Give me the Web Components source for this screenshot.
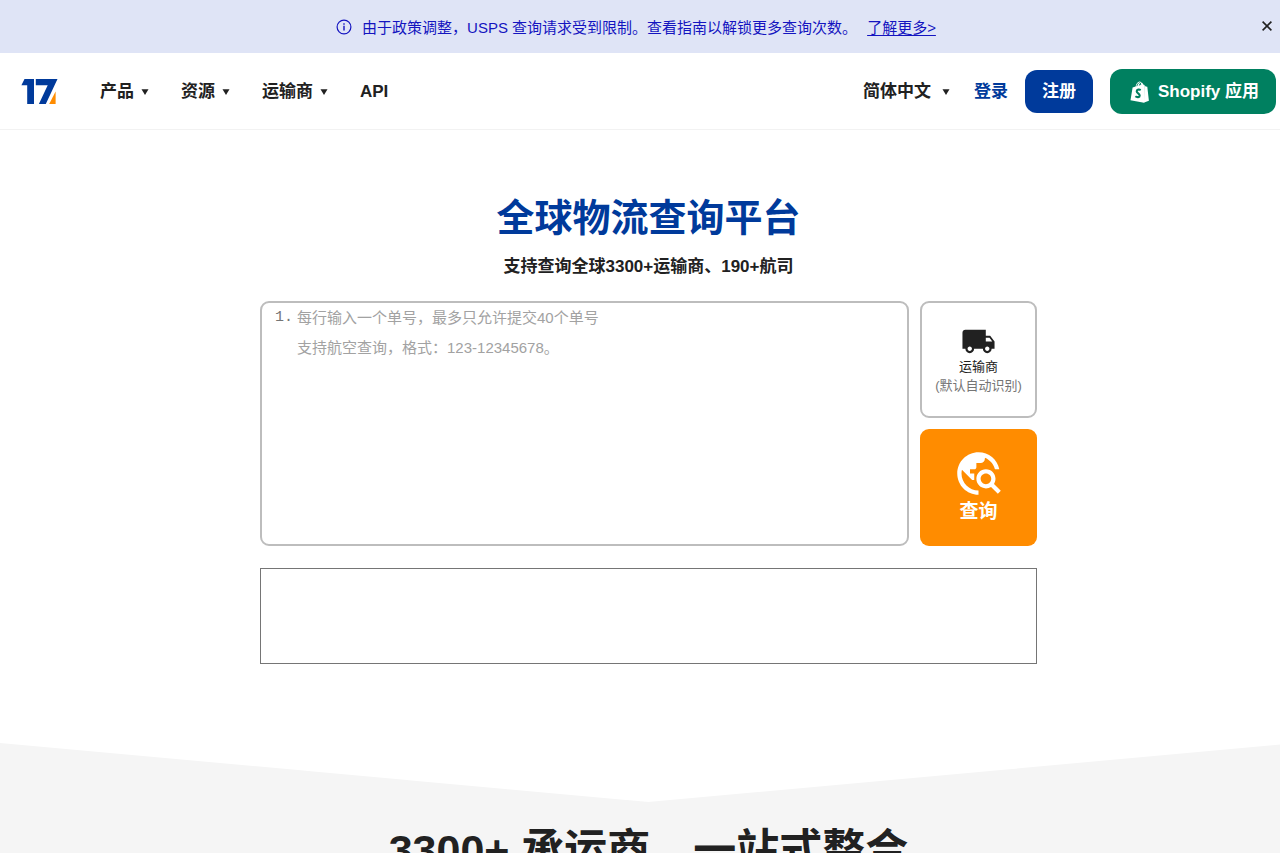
<!DOCTYPE html>
<html lang="zh-CN">
<head>
<meta charset="utf-8">
<meta name="viewport" content="width=device-width, initial-scale=1">
<title>全球物流查询平台</title>
<style>
  :root {
    --brand: #003a9b;
    --brand-accent: #ff8c00;
    --text: #212121;
    --muted: #757575;
    --outline: #bdbdbd;
    --page-min: 1297px;
  }
  html { scrollbar-width: none; }
  body {
    margin: 0;
    min-height: 100vh;
    overflow-x: hidden;
    background: #fff;
    color: var(--text);
    font: 17px/24px "Liberation Sans", Arial, "Noto Sans CJK SC", sans-serif;
  }
</style>
</head>
<body>
<notice-banner>
  由于政策调整，USPS 查询请求受到限制。查看指南以解锁更多查询次数。
  <a slot="link" href="#guide">了解更多&gt;</a>
</notice-banner>

<site-header>
  <nav-menu slot="nav">产品</nav-menu>
  <nav-menu slot="nav">资源</nav-menu>
  <nav-menu slot="nav">运输商</nav-menu>
  <nav-link slot="nav" href="#api">API</nav-link>
  <nav-menu slot="actions" wide>简体中文</nav-menu>
  <nav-link slot="actions" href="#login" accent>登录</nav-link>
  <pill-button slot="actions">注册</pill-button>
  <pill-button slot="actions" variant="shopify">Shopify 应用</pill-button>
</site-header>

<track-hero>
  <span slot="title">全球物流查询平台</span>
  <span slot="subtitle">支持查询全球3300+运输商、190+航司</span>
  <track-form></track-form>
  <ad-frame></ad-frame>
</track-hero>

<carrier-section>3300+ 承运商，一站式整合</carrier-section>

<script>
const baseStyles = `
  *, *::before, *::after { box-sizing: border-box; }
  button, textarea { font: inherit; color: inherit; margin: 0; }
  button { border: 0; padding: 0; background: none; cursor: pointer; }
  svg { display: block; flex: none; }
`;

/**
 * Shared base: renders `markup` and `styles` of the subclass in an open shadow root
 */
class BaseElement extends HTMLElement {
  static styles = "";
  static markup = "<slot></slot>";

  constructor() {
    super();
    const template = document.createElement("template");
    template.innerHTML = `<style>${baseStyles}${this.constructor.styles}</style>${this.constructor.markup}`;
    this.attachShadow({ mode: "open" }).appendChild(template.content.cloneNode(true));
  }
}

class NoticeBanner extends BaseElement {
  static styles = `
    :host {
      display: flex;
      align-items: center;
      min-height: 53px;
      padding-left: 18px;
      background: #dfe4f6;
      color: #1414c0;
      font-size: 15px;
    }
    .message {
      flex: 1;
      display: flex;
      align-items: center;
      justify-content: center;
      gap: 10px;
      padding-top: 2px;
    }
    svg { margin-bottom: 2px; }
    ::slotted(a) { color: inherit; text-underline-offset: 2px; }
    .close {
      display: grid;
      place-items: center;
      width: 26px;
      height: 26px;
      color: #212121;
    }
  `;
  static markup = `
    <div class="message">
      <svg width="16" height="16" viewBox="0 0 16 16" fill="none" stroke="currentColor" aria-hidden="true">
        <circle cx="8" cy="8" r="6.9" stroke-width="1.2"/>
        <path d="M8 6.8v4.8M8 4.2v1.5" stroke-width="1.4"/>
      </svg>
      <span><slot></slot></span>
      <slot name="link"></slot>
    </div>
    <button class="close" type="button" aria-label="关闭">
      <svg width="10" height="10" viewBox="0 0 10 10" stroke="currentColor" stroke-width="1.6" aria-hidden="true">
        <path d="M.6.6l8.8 8.8M9.4.6L.6 9.4"/>
      </svg>
    </button>
  `;

  connectedCallback() {
    this.shadowRoot.querySelector(".close").addEventListener("click", () => this.remove());
  }
}

class SiteHeader extends BaseElement {
  static styles = `
    :host {
      display: flex;
      align-items: center;
      justify-content: space-between;
      min-width: var(--page-min);
      min-height: 77px;
      box-sizing: border-box;
      padding: 0 21px;
      border-bottom: 1px solid #f2f2f2;
      font-weight: 700;
    }
    nav, .left, .actions { display: flex; align-items: center; }
    .left { gap: 42px; padding-top: 2px; }
    nav { gap: 32px; }
    .actions { gap: 17px; }
  `;
  static markup = `
    <div class="left">
      <a href="#home" aria-label="17TRACK">
        <svg width="37" height="26" viewBox="0 0 37 26" aria-hidden="true">
          <path fill="#003a9b" d="M3.500 0H13V25H6.200V6.200H.4z"/>
          <path fill="#003a9b" d="M14.800 0H36.500L24.800 25H17.900L26.700 6.200H14.800z"/>
          <path fill="#ff8c00" d="M34.600 12.500V25H28.200z"/>
        </svg>
      </a>
      <nav><slot name="nav"></slot></nav>
    </div>
    <div class="actions"><slot name="actions"></slot></div>
  `;
}

class NavMenu extends BaseElement {
  static styles = `
    :host { display: block; }
    :host([wide]) { margin-right: 7px; }
    button { display: flex; align-items: center; gap: 7px; font-weight: 700; }
    :host([wide]) button { gap: 11px; padding-top: 2px; }
  `;
  static markup = `
    <button type="button" aria-haspopup="true">
      <slot></slot>
      <svg width="8" height="6" viewBox="0 0 8 6" fill="currentColor" aria-hidden="true"><path d="M.5.3h7L4 5.900z"/></svg>
    </button>
  `;
}

class NavLink extends BaseElement {
  static styles = `
    :host { display: block; }
    a { color: inherit; text-decoration: none; }
    :host([accent]) { padding-top: 2px; }
    :host([accent]) a { color: var(--brand); }
  `;
  static markup = `<a><slot></slot></a>`;

  connectedCallback() {
    this.shadowRoot.querySelector("a").href = this.getAttribute("href") || "#";
  }
}

class PillButton extends BaseElement {
  static styles = `
    :host { display: block; }
    button {
      display: flex;
      align-items: center;
      gap: 8px;
      height: 43px;
      padding: 2px 17px 0;
      border-radius: 12px;
      background: var(--brand);
      color: #fff;
      font-weight: 700;
    }
    svg { display: none; }
    :host([variant="shopify"]) button { height: 45px; padding-left: 20px; background: #008060; }
    :host([variant="shopify"]) svg { display: block; }
  `;
  static markup = `
    <button type="button">
      <svg width="20" height="22" viewBox="0 0 20 22" aria-hidden="true">
        <path fill="#fff" d="M2.600 6.400l3-.9C6.200 2.900 7.800.8 9.600.6c.7 0 1.200.4 1.500 1 1-.1 1.700.8 2.100 2l1 .2L15 20.800l-1 .9L.5 19.300z"/>
        <path fill="#fff" d="M14.200 4l1.500 1.500 1.600.2L18.900 19.700l-4.700 1.700z"/>
        <path fill="none" stroke="#008060" stroke-width=".9" d="M6.800 5.200C7.300 3.300 8.400 1.800 9.600 1.600M9.300 4.500c.2-1.100.7-1.900 1.500-2.200M10 1.600c.6.7.7 1.600.7 2.500"/>
        <path fill="none" stroke="#008060" stroke-width="2.100" d="M10.700 9.100C9.300 8.200 6.700 8.400 6.700 10.300c0 2 3 2 3 4.100 0 2.100-2.700 2.200-4.300.9"/>
      </svg>
      <span><slot></slot></span>
    </button>
  `;
}

class TrackHero extends BaseElement {
  static styles = `
    :host {
      display: block;
      min-width: var(--page-min);
      box-sizing: border-box;
      padding: 60px 24px 79px;
    }
    .inner { max-width: 777px; margin: 0 auto; }
    h1, p { margin: 0; text-align: center; font-weight: 700; }
    h1 { color: var(--brand); font-size: 38px; line-height: 56px; }
    p { margin: 9px 0 22px; }
    .stack { display: grid; gap: 22px; }
  `;
  static markup = `
    <div class="inner">
      <h1><slot name="title"></slot></h1>
      <p><slot name="subtitle"></slot></p>
      <div class="stack"><slot></slot></div>
    </div>
  `;
}

class TrackForm extends BaseElement {
  static styles = `
    :host { display: block; }
    form { display: grid; grid-template-columns: 1fr 117px; gap: 11px; }
    .numbers {
      display: flex;
      gap: 4px;
      padding: 0 13px;
      border: 2px solid var(--outline);
      border-radius: 9px;
      font-size: 15px;
      line-height: 30px;
    }
    .gutter { color: var(--muted); font-family: "Liberation Mono", monospace; }
    textarea {
      flex: 1;
      padding: 0;
      border: 0;
      outline: 0;
      resize: none;
      background: none;
    }
    textarea::placeholder { color: #a2a2a2; opacity: 1; }
    .side { display: grid; gap: 11px; }
    .side button {
      display: flex;
      flex-direction: column;
      align-items: center;
      justify-content: center;
      height: 117px;
      border-radius: 9px;
    }
    .side .carrier { border: 2px solid var(--outline); font-size: 13px; line-height: 19px; }
    .carrier svg { margin-bottom: -2px; }
    .carrier small { color: var(--muted); font-size: 13px; }
    .side .submit {
      padding-bottom: 2px;
      background: var(--brand-accent);
      color: #fff;
      font-size: 19px;
      font-weight: 700;
      line-height: 26px;
    }
  `;
  static markup = `
    <form>
      <div class="numbers">
        <label class="gutter" for="numbers">1.</label>
        <textarea id="numbers" placeholder="每行输入一个单号，最多只允许提交40个单号&#10;支持航空查询，格式：123-12345678。"></textarea>
      </div>
      <div class="side">
        <button class="carrier" type="button">
          <svg width="35" height="35" viewBox="0 0 24 24" fill="currentColor" aria-hidden="true">
            <path d="M20 8h-3V4H3c-1.100 0-2 .9-2 2v11h2c0 1.660 1.340 3 3 3s3-1.340 3-3h6c0 1.660 1.340 3 3 3s3-1.340 3-3h2v-5zM6 18.500c-.83 0-1.500-.67-1.500-1.500s.67-1.500 1.500-1.500 1.500.67 1.500 1.500-.67 1.500-1.500 1.500m13.500-9 1.960 2.500H17V9.500zm-1.500 9c-.83 0-1.500-.67-1.500-1.500s.67-1.500 1.500-1.500 1.500.67 1.500 1.500-.67 1.500-1.500 1.500"/>
          </svg>
          <span>运输商</span>
          <small>(默认自动识别)</small>
        </button>
        <button class="submit" type="submit">
          <svg width="51" height="51" viewBox="0 0 24 24" fill="currentColor" aria-hidden="true">
            <path d="M19.300 16.900c.4-.7.7-1.500.7-2.400 0-2.500-2-4.500-4.500-4.500S11 12 11 14.500s2 4.500 4.500 4.500c.9 0 1.700-.3 2.400-.7l3.200 3.200 1.400-1.400zm-3.800.1c-1.400 0-2.500-1.100-2.500-2.500s1.100-2.500 2.500-2.500 2.500 1.100 2.500 2.500-1.100 2.500-2.500 2.500M12 20v2C6.480 22 2 17.520 2 12S6.480 2 12 2c4.840 0 8.870 3.440 9.800 8h-2.070c-.64-2.460-2.400-4.470-4.730-5.410V5c0 1.100-.9 2-2 2h-2v2c0 .55-.45 1-1 1H8v2h2v3H9l-4.790-4.790C4.080 10.790 4 11.380 4 12c0 4.410 3.590 8 8 8"/>
          </svg>
          <span>查询</span>
        </button>
      </div>
    </form>
  `;

  connectedCallback() {
    this.shadowRoot.querySelector("form").addEventListener("submit", (e) => {
      e.preventDefault();
    });
  }
}

class AdFrame extends BaseElement {
  static styles = `
    :host {
      display: block;
      box-sizing: border-box;
      min-height: 96px;
      border: 1px solid var(--muted);
    }
  `;
}

class CarrierSection extends BaseElement {
  static styles = `
    :host {
      display: block;
      min-width: var(--page-min);
      background: #f5f5f5;
    }
    .wedge {
      height: 59px;
      background: #fff;
      clip-path: polygon(0 0, 100% 0, 50% 100%);
    }
    h2 {
      margin: 0;
      padding: 18px 24px 40px;
      text-align: center;
      font-size: 43px;
      line-height: 60px;
    }
  `;
  static markup = `
    <div class="wedge"></div>
    <h2><slot></slot></h2>
  `;
}

customElements.define("notice-banner", NoticeBanner);
customElements.define("site-header", SiteHeader);
customElements.define("nav-menu", NavMenu);
customElements.define("nav-link", NavLink);
customElements.define("pill-button", PillButton);
customElements.define("track-hero", TrackHero);
customElements.define("track-form", TrackForm);
customElements.define("ad-frame", AdFrame);
customElements.define("carrier-section", CarrierSection);
</script>
</body>
</html>
